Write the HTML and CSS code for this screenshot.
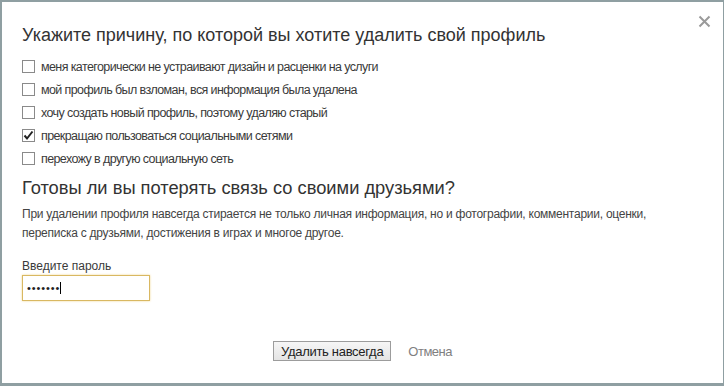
FILE: index.html
```html
<!DOCTYPE html>
<html lang="ru">
<head>
    <meta charset="UTF-8">
    <title>Удаление профиля</title>
    <link rel="stylesheet" href="styles.css">
</head>
<body>
    <div class="dialog">
        <svg class="close" width="13" height="13" viewBox="0 0 13 13"><path d="M1.5 1.5 L11.5 11.5 M11.5 1.5 L1.5 11.5" stroke="#9a9a9a" stroke-width="2"/></svg>
        <h1 class="title">Укажите причину, по которой вы хотите удалить свой профиль</h1>

        <div class="reasons">
            <label class="reason"><span class="box"></span>меня категорически не устраивают дизайн и расценки на услуги</label>
            <label class="reason"><span class="box"></span>мой профиль был взломан, вся информация была удалена</label>
            <label class="reason"><span class="box"></span>хочу создать новый профиль, поэтому удаляю старый</label>
            <label class="reason"><span class="box">
                <svg width="11" height="11" viewBox="0 0 11 11"><path d="M1.5 5.5 L4 8.5 L9.5 1.5" fill="none" stroke="#222" stroke-width="2"/></svg>
            </span>прекращаю пользоваться социальными сетями</label>
            <label class="reason"><span class="box"></span>перехожу в другую социальную сеть</label>
        </div>

        <h2 class="subtitle">Готовы ли вы потерять связь со своими друзьями?</h2>
        <p class="note">При удалении профиля навсегда стирается не только личная информация, но и фотографии, комментарии, оценки, переписка с друзьями, достижения в играх и многое другое.</p>

        <div class="field">
            <label class="field-label">Введите пароль</label>
            <div class="pass"><span class="dots">&bull;&bull;&bull;&bull;&bull;&bull;&bull;</span><span class="caret"></span></div>
        </div>

        <div class="actions">
            <button class="btn" type="button">Удалить навсегда</button>
            <a class="cancel" href="#">Отмена</a>
        </div>
    </div>
</body>
</html>
```

FILE: styles.css
```css
html, body {
    margin: 0;
    padding: 0;
    background: #8f9fa2;
    font-family: "Liberation Sans", Arial, sans-serif;
    color: #333;
}

.dialog {
    position: relative;
    background: #fff;
    margin: 2px 1px 3px 2px;
    height: 381px;
    box-sizing: border-box;
    padding: 21px 20px 0 20px;
}

.close {
    position: absolute;
    top: 13px;
    right: 12px;
}

.title {
    margin: 0 0 8px;
    font-size: 18px;
    font-weight: normal;
    color: #333;
    line-height: 24px;
}

.reason {
    display: flex;
    align-items: center;
    height: 23px;
    font-size: 12.5px;
    letter-spacing: -0.6px;
    color: #3a3a3a;
}

.box {
    width: 11px;
    height: 11px;
    border: 1px solid #8a8a8a;
    margin-right: 6px;
    display: flex;
    align-items: center;
    justify-content: center;
}

.subtitle {
    margin: 6px 0 5px;
    font-size: 18.3px;
    font-weight: normal;
    color: #333;
    line-height: 24px;
}

.note {
    margin: 0;
    font-size: 12px;
    letter-spacing: -0.25px;
    line-height: 19px;
    color: #444;
    width: 640px;
}

.field {
    margin-top: 15px;
}

.field-label {
    display: block;
    font-size: 12px;
    line-height: 16px;
    margin-bottom: 1px;
    color: #3a3a3a;
}

.pass {
    width: 128px;
    height: 26px;
    box-sizing: border-box;
    border: 1px solid #d9b862;
    box-shadow: 0 0 2px #f0d690;
    display: flex;
    align-items: center;
    padding-left: 4px;
}

.dots {
    font-size: 11px;
    letter-spacing: 0.9px;
    color: #222;
}

.caret {
    width: 1px;
    height: 12px;
    background: #000;
}

.actions {
    display: flex;
    align-items: center;
    justify-content: center;
    margin-top: 40px;
    gap: 17px;
}

.btn {
    font-family: inherit;
    font-size: 13px;
    letter-spacing: -0.3px;
    color: #222;
    background: linear-gradient(#f6f6f6, #e4e4e4);
    border: 1px solid #9c9c9c;
    padding: 0 7px;
    height: 20px;
    border-radius: 0;
}

.cancel {
    font-size: 13px;
    letter-spacing: -0.5px;
    color: #808080;
    text-decoration: none;
}
```
